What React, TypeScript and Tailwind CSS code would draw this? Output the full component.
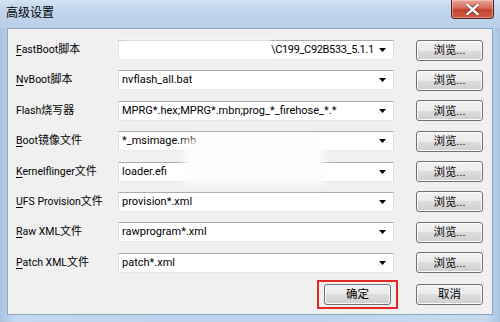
import React from "react";

const font = { fontFamily: 'Roboto, "Noto Sans CJK SC", sans-serif' };

function Label({ u, rest, cjk }: { u: string; rest: string; cjk: string }) {
  return (
    <div className="w-[102px] shrink-0 text-[10.5px] leading-[20px] text-black whitespace-nowrap">
      <span className="underline underline-offset-[2px] decoration-[1px]">{u}</span>
      {rest}
      <span className="text-[11px]">{cjk}</span>
    </div>
  );
}

function Combo({ value, pad }: { value: string; pad?: string }) {
  return (
    <div className="relative flex h-[20px] w-[276px] shrink-0 items-center border border-[#abadb3] border-l-[#dadde3] border-r-[#dadde3] border-b-[#e3e9ef] bg-white">
      <div className={`flex-1 whitespace-nowrap overflow-hidden text-[11px] leading-[18px] text-black ${pad ?? "pl-[3px]"}`}>
        {value}
      </div>
      <div className="flex h-full w-[14px] items-center justify-start">
        <svg width="7" height="4" viewBox="0 0 7 4">
          <path d="M0 0 H7 L3.5 4 Z" fill="#000" />
        </svg>
      </div>
    </div>
  );
}

function Btn({ children }: { children: React.ReactNode }) {
  return (
    <div className="flex h-[21px] w-[67px] items-center justify-center rounded-[3px] border border-[#707070] bg-[linear-gradient(#f2f2f2_0%,#ebebeb_50%,#dddddd_50%,#cfcfcf_100%)] text-[11.5px] leading-[16px] text-black shadow-[inset_0_0_0_1px_#fcfcfc]">
      {children}
    </div>
  );
}

const rows: { u: string; rest: string; cjk: string; value: string; pad?: string }[] = [
  { u: "F", rest: "astBoot", cjk: "脚本", value: "\\C199_C92B533_5.1.1", pad: "pl-[152px] tracking-[-0.35px]" },
  { u: "N", rest: "vBoot", cjk: "脚本", value: "nvflash_all.bat" },
  { u: "", rest: "Flash", cjk: "烧写器", value: "MPRG*.hex;MPRG*.mbn;prog_*_firehose_*.*" },
  { u: "B", rest: "oot", cjk: "镜像文件", value: "*_msimage.mb" },
  { u: "K", rest: "ernelflinger", cjk: "文件", value: "loader.efi" },
  { u: "U", rest: "FS Provision", cjk: "文件", value: "provision*.xml" },
  { u: "R", rest: "aw XML", cjk: "文件", value: "rawprogram*.xml" },
  { u: "P", rest: "atch XML", cjk: "文件", value: "patch*.xml" },
];

export default function App() {
  return (
    <div
      style={font}
      className="relative h-[322px] w-[500px] overflow-hidden bg-[linear-gradient(90deg,#a9c3e0_0%,#c3d8ee_3%,#bcd3eb_50%,#c6daef_97%,#a9c3e0_100%)]"
    >
      {/* title bar */}
      <div className="flex h-[28px] items-start justify-between bg-[linear-gradient(180deg,#d2e2f3_0%,#bfd5ec_40%,#b9d0e9_100%)] pl-[6px] pr-[6px]">
        <div className="pt-[5px] text-[12px] leading-[16px] text-black">高级设置</div>
        <div className="flex h-[19px] w-[43px] items-center justify-center rounded-b-[4px] border border-t-0 border-[#5b2320] bg-[linear-gradient(180deg,#e9a395_0%,#d66a58_45%,#c4402e_55%,#cf5a48_100%)] shadow-[inset_0_0_0_1px_rgba(255,255,255,0.35)]">
          <svg width="13" height="11" viewBox="0 0 13 11">
            <path
              d="M1.5 1 L11.5 10 M11.5 1 L1.5 10"
              stroke="#3a1a18"
              strokeWidth="4"
              strokeLinecap="round"
              opacity="0.55"
            />
            <path d="M1.5 1 L11.5 10 M11.5 1 L1.5 10" stroke="#fff" strokeWidth="2.4" strokeLinecap="square" />
          </svg>
        </div>
      </div>

      {/* client area */}
      <div className="relative mx-[7px] h-[287px] border border-[#8ba3c1] bg-[#f0f0f0]">
        <div className="flex flex-col gap-[10.4px] pl-[8px] pt-[11px]">
          {rows.map((r, i) => (
            <div key={i} className="flex h-[20px] items-center">
              <Label u={r.u} rest={r.rest} cjk={r.cjk} />
              <Combo value={r.value} pad={r.pad} />
              <div className="ml-[22px]">
                <Btn>浏览...</Btn>
              </div>
            </div>
          ))}
        </div>

        {/* bottom buttons */}
        <div className="mt-[11px] flex justify-end gap-[22px] pr-[9px]">
          <div className="border-2 border-[#e32626] p-[2px] px-[5px] -my-[4px] -mr-[4px]">
            <Btn>确定</Btn>
          </div>
          <Btn>取消</Btn>
        </div>

        {/* privacy blur overlays */}
        <div className="absolute left-[112px] top-[11px] h-[18px] w-[150px] bg-white blur-[2px]" />
        <div className="absolute left-[176px] top-[111px] h-[45px] w-[140px] bg-[#fdfdfd] blur-[4px]" />
      </div>
    </div>
  );
}
